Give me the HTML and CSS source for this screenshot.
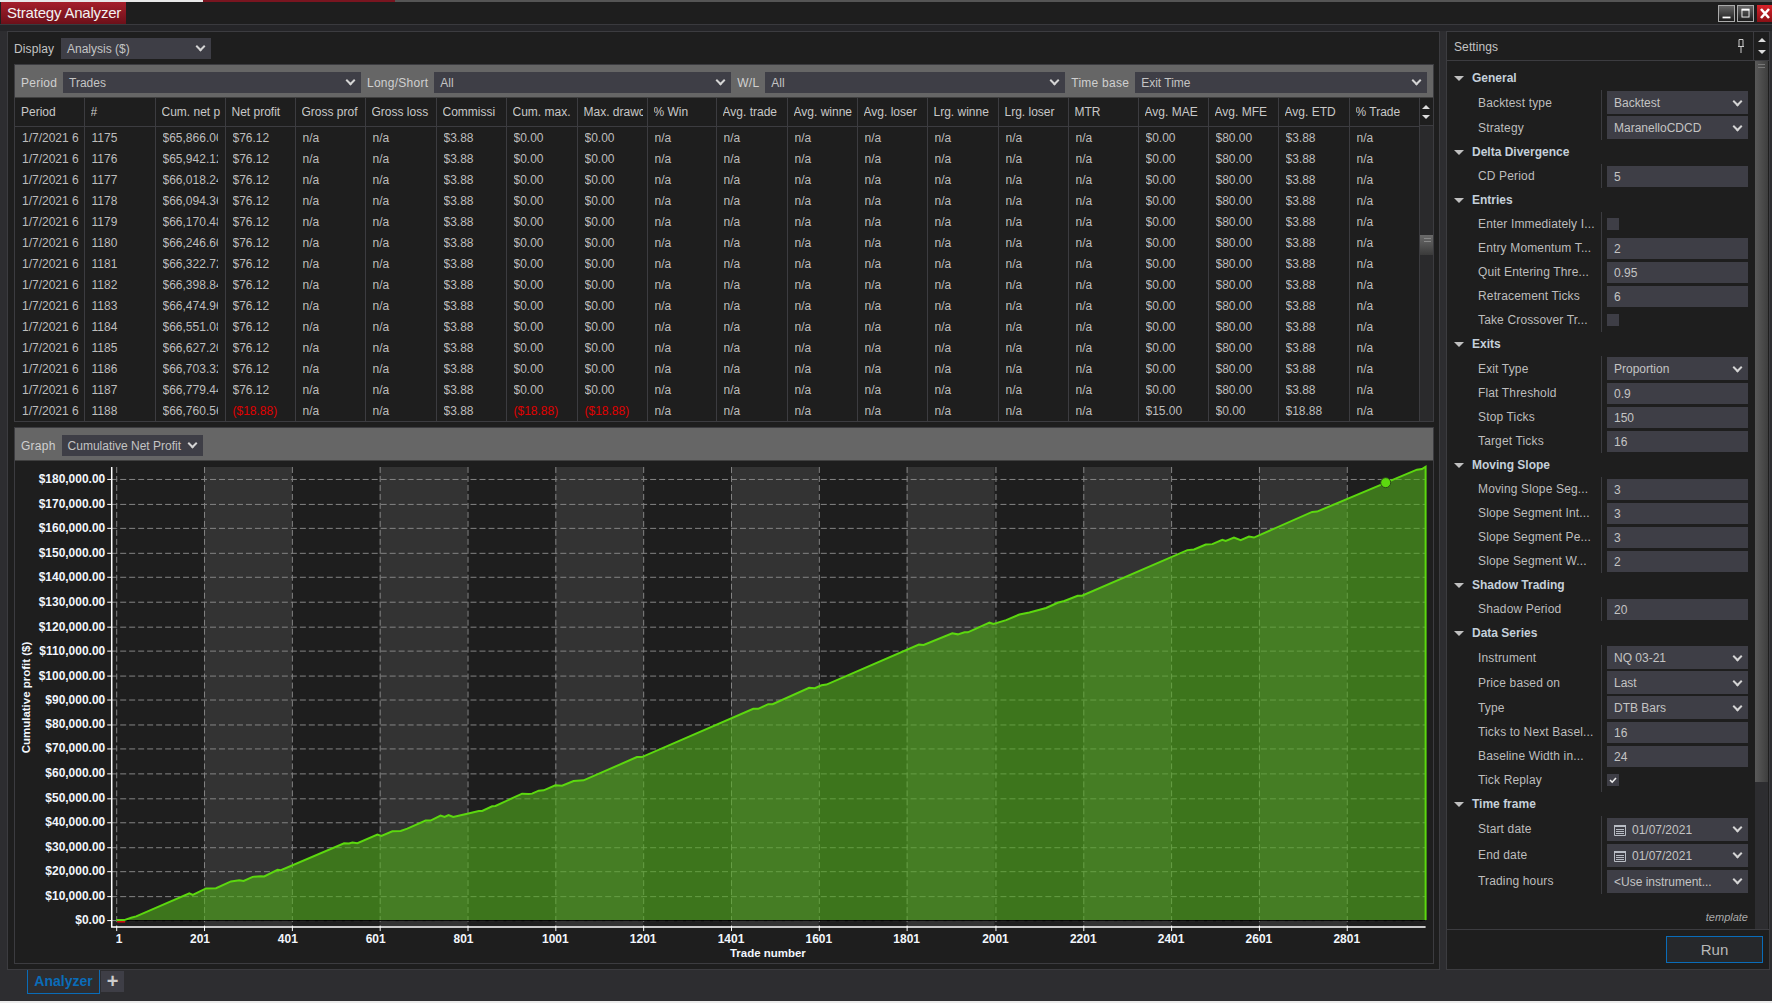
FILE: index.html
```html
<!DOCTYPE html>
<html lang="en">
  <head>
    <meta charset="UTF-8" />
    <title>Strategy Analyzer</title>
    <link rel="stylesheet" href="styles.css">
  </head>
  <body>
    <div class="top-strip"></div>

    <header class="titlebar">
      <div class="title-tab">Strategy Analyzer</div>
      <div class="window-buttons">
        <svg class="win-btn" viewBox="0 0 17 17"><rect x="4" y="12" width="9" height="2" fill="#fff" /></svg>
        <svg class="win-btn" viewBox="0 0 17 17"><rect x="4.5" y="4.5" width="8" height="8" fill="none" stroke="#fff" /><rect x="4" y="3" width="9" height="2" fill="#fff" /></svg>
        <svg class="win-btn win-close" viewBox="0 0 15 17"><path d="M4 4l8 9M12 4l-8 9" stroke="#fff" stroke-width="2.6" /></svg>
      </div>
    </header>

    <main class="main">
      <section class="left-panel">
        <div class="display-row">
          <span class="display-label">Display</span>
          <div class="select display-select">Analysis ($)</div>
        </div>

        <div class="frame">
          <div class="band">
            <span class="period-label">Period</span>
            <div class="select period-select">Trades</div>
            <span>Long/Short</span>
            <div class="select side-select">All</div>
            <span>W/L</span>
            <div class="select wl-select">All</div>
            <span>Time base</span>
            <div class="select grow">Exit Time</div>
          </div>
          <div class="table-wrap">
            <table class="trades" id="trades"></table>
            <div class="table-scroll">
              <div class="scroll-head">
                <i class="arrow-up"></i>
                <i class="arrow-down"></i>
              </div>
              <div class="table-thumb"></div>
            </div>
          </div>
        </div>

        <div class="frame graph-frame">
          <div class="band">
            <span>Graph</span>
            <div class="select graph-select">Cumulative Net Profit</div>
          </div>
          <svg class="chart" id="chart" viewBox="15 460 1418 503"></svg>
        </div>
      </section>

      <aside class="settings">
        <div class="settings-head">
          <span class="settings-title">Settings</span>
          <svg class="pin" viewBox="0 0 8 16"><path d="M2 1.5h4v7H2zM1 8.5h6M4 9v6" fill="none" stroke="#ccc" /></svg>
          <div class="settings-arrows">
            <i class="arrow-up"></i>
            <i class="arrow-down"></i>
          </div>
        </div>

        <div class="settings-body">
          <div class="settings-list">
            <div class="cat"><i class="tri"></i>General</div>
            <div class="row tall"><span class="lbl">Backtest type</span><div class="val"><div class="select box">Backtest</div></div></div>
            <div class="row tall"><span class="lbl">Strategy</span><div class="val"><div class="select box">MaranelloCDCD</div></div></div>

            <div class="cat"><i class="tri"></i>Delta Divergence</div>
            <div class="row"><span class="lbl">CD Period</span><div class="val"><div class="box">5</div></div></div>

            <div class="cat"><i class="tri"></i>Entries</div>
            <div class="row"><span class="lbl">Enter Immediately I...</span><div class="val"><div class="check"></div></div></div>
            <div class="row"><span class="lbl">Entry Momentum T...</span><div class="val"><div class="box">2</div></div></div>
            <div class="row"><span class="lbl">Quit Entering Thre...</span><div class="val"><div class="box">0.95</div></div></div>
            <div class="row"><span class="lbl">Retracement Ticks</span><div class="val"><div class="box">6</div></div></div>
            <div class="row"><span class="lbl">Take Crossover Tr...</span><div class="val"><div class="check"></div></div></div>

            <div class="cat"><i class="tri"></i>Exits</div>
            <div class="row tall"><span class="lbl">Exit Type</span><div class="val"><div class="select box">Proportion</div></div></div>
            <div class="row"><span class="lbl">Flat Threshold</span><div class="val"><div class="box">0.9</div></div></div>
            <div class="row"><span class="lbl">Stop Ticks</span><div class="val"><div class="box">150</div></div></div>
            <div class="row"><span class="lbl">Target Ticks</span><div class="val"><div class="box">16</div></div></div>

            <div class="cat"><i class="tri"></i>Moving Slope</div>
            <div class="row"><span class="lbl">Moving Slope Seg...</span><div class="val"><div class="box">3</div></div></div>
            <div class="row"><span class="lbl">Slope Segment Int...</span><div class="val"><div class="box">3</div></div></div>
            <div class="row"><span class="lbl">Slope Segment Pe...</span><div class="val"><div class="box">3</div></div></div>
            <div class="row"><span class="lbl">Slope Segment W...</span><div class="val"><div class="box">2</div></div></div>

            <div class="cat"><i class="tri"></i>Shadow Trading</div>
            <div class="row"><span class="lbl">Shadow Period</span><div class="val"><div class="box">20</div></div></div>

            <div class="cat"><i class="tri"></i>Data Series</div>
            <div class="row tall"><span class="lbl">Instrument</span><div class="val"><div class="select box">NQ 03-21</div></div></div>
            <div class="row tall"><span class="lbl">Price based on</span><div class="val"><div class="select box">Last</div></div></div>
            <div class="row tall"><span class="lbl">Type</span><div class="val"><div class="select box">DTB Bars</div></div></div>
            <div class="row"><span class="lbl">Ticks to Next Basel...</span><div class="val"><div class="box">16</div></div></div>
            <div class="row"><span class="lbl">Baseline Width in...</span><div class="val"><div class="box">24</div></div></div>
            <div class="row"><span class="lbl">Tick Replay</span><div class="val"><div class="check"><svg viewBox="0 0 12 12"><path d="M3 6l2.2 2.2L9 4" fill="none" stroke="#eee" stroke-width="1.6" /></svg></div></div></div>

            <div class="cat"><i class="tri"></i>Time frame</div>
            <div class="row taller"><span class="lbl">Start date</span><div class="val"><div class="select box date"><svg class="cal" viewBox="0 0 12 12"><path d="M.5 1.5h11v10H.5z" fill="none" stroke="#b8bcc4" /><path d="M0 1h12v2H0zM2 5h8v1H2zM2 7h8v1H2zM2 9h8v1H2z" fill="#b8bcc4" /></svg>01/07/2021</div></div></div>
            <div class="row taller"><span class="lbl">End date</span><div class="val"><div class="select box date"><svg class="cal" viewBox="0 0 12 12"><path d="M.5 1.5h11v10H.5z" fill="none" stroke="#b8bcc4" /><path d="M0 1h12v2H0zM2 5h8v1H2zM2 7h8v1H2zM2 9h8v1H2z" fill="#b8bcc4" /></svg>01/07/2021</div></div></div>
            <div class="row taller"><span class="lbl">Trading hours</span><div class="val"><div class="select box">&lt;Use instrument...</div></div></div>

            <div class="template">template</div>
          </div>
          <div class="settings-scroll">
            <div class="settings-thumb"></div>
          </div>
        </div>

        <div class="settings-foot">
          <button class="run">Run</button>
        </div>
      </aside>
    </main>

    <footer class="tabbar">
      <div class="tab">Analyzer</div>
      <div class="tab-add">+</div>
    </footer>
    <div class="bottom-strip"></div>

    <script src="script.js"></script>
  </body>
</html>
```

FILE: styles.css
```css
html {
  font-family: "Liberation Sans", Arial, sans-serif;
  font-size: 12px;
}

body {
  margin: 0;
  width: 1772px;
  height: 1003px;
  overflow: hidden;
  background-color: #2d2d30;
  color: #bdbdbd;
}

.top-strip {
  height: 2px;
  background: linear-gradient(to right, #e8e8e8 203px, #7a1520 203px, #7a1520 395px, #555 395px);
}

.titlebar {
  display: flex;
  justify-content: space-between;
  height: 22px;
  background-color: #1e1e1e;
  border-bottom: 1px solid #3a3a3e;
}

.title-tab {
  width: 125px;
  box-sizing: border-box;
  margin-left: 1px;
  padding-left: 6px;
  line-height: 22px;
  font-size: 15px;
  letter-spacing: -0.2px;
  white-space: nowrap;
  color: #f2f2f2;
  background: linear-gradient(to bottom, #a51f2b, #6c1019);
}

.window-buttons {
  display: flex;
  gap: 2px;
  padding-top: 3px;
}

.win-btn {
  width: 17px;
  height: 17px;
  box-sizing: border-box;
  border: 1px solid #aaa;
  background: linear-gradient(to bottom, #666, #1c1c1c);
}

.win-close {
  width: 15px;
  margin-left: 1px;
  border: none;
  background: linear-gradient(to bottom, #d8232a, #8a1016);
}

.main {
  display: flex;
  gap: 6px;
  height: 945px;
  box-sizing: border-box;
  padding: 6px 2px 0 7px;
  background: linear-gradient(to bottom, #252528 6px, transparent 6px);
}

.left-panel {
  display: flex;
  flex-direction: column;
  width: 1433px;
  box-sizing: border-box;
  padding: 0 5px 5px 6px;
  background-color: #1e1e1e;
  border: 1px solid #3c3c40;
}

.display-row {
  display: flex;
  align-items: center;
  height: 32px;
  padding-top: 1px;
  box-sizing: border-box;
  flex: none;
}

.display-label {
  width: 47px;
  color: #c4c4c4;
  letter-spacing: 0.1px;
}

.select {
  display: flex;
  align-items: center;
  justify-content: space-between;
  height: 21px;
  box-sizing: border-box;
  padding: 0 7px 0 6px;
  background-color: #3e3e46;
  color: #c4c4c4;
  white-space: nowrap;
}

.select::after {
  content: "";
  width: 5px;
  height: 5px;
  margin: -4px 0 0 0;
  border-right: 2px solid #d4d4d4;
  border-bottom: 2px solid #d4d4d4;
  transform: rotate(45deg);
}

.display-select {
  width: 150px;
}

.period-label {
  width: 36px;
}

.period-select {
  width: 298px;
}

.side-select {
  width: 297px;
}

.wl-select {
  width: 300px;
}

.grow {
  flex: 1;
}

.graph-select {
  width: 141px;
}

.frame {
  display: flex;
  flex-direction: column;
  flex: none;
  border: 1px solid #3c3c40;
}

.graph-frame {
  flex: 1;
  min-height: 0;
  margin-top: 5px;
}

.band {
  display: flex;
  align-items: center;
  gap: 6px;
  height: 33px;
  flex: none;
  box-sizing: border-box;
  padding: 3px 6px 0;
  background-color: #666;
  color: #d0d0d0;
  border-bottom: 1px solid #404040;
  letter-spacing: 0.25px;
}

.band .select {
  letter-spacing: 0;
}

.table-wrap {
  display: flex;
}

.trades {
  width: 1404px;
  table-layout: fixed;
  border-collapse: collapse;
  flex: none;
}

.trades th,
.trades td {
  padding: 0;
  border-right: 1px solid #3c3c40;
  font-weight: normal;
  text-align: left;
}

.trades th {
  height: 28px;
  border-bottom: 1px solid #3c3c40;
  color: #c8c8c8;
}

.trades td {
  height: 21px;
}

.cell {
  margin: 0 7px 0 7px;
  overflow: hidden;
  white-space: nowrap;
}

.trades td:first-child .cell {
  margin-right: 3px;
}

.trades th .cell {
  margin-left: 6px;
  margin-right: 4px;
}

.loss {
  color: #e00000;
}

.table-scroll {
  flex: 1;
  background-color: #2a2a2c;
}

.scroll-head {
  display: flex;
  flex-direction: column;
  align-items: center;
  justify-content: center;
  gap: 6px;
  height: 28px;
  background-color: #1e1e1e;
  border-bottom: 1px solid #3c3c40;
  box-sizing: border-box;
}

.arrow-up,
.arrow-down {
  width: 0;
  height: 0;
  border-left: 4px solid transparent;
  border-right: 4px solid transparent;
}

.arrow-up {
  border-bottom: 4px solid #ddd;
}

.arrow-down {
  border-top: 4px solid #ddd;
}

.table-thumb {
  height: 20px;
  margin-top: 109px;
  background:
    linear-gradient(to bottom, transparent 3px, #888 3px, #888 4px, transparent 4px, transparent 6px, #888 6px, #888 7px, transparent 7px) 4px 0 / 7px 100% no-repeat,
    linear-gradient(to bottom, #6a6a6a, #3a3a3a);
}

.chart {
  display: block;
  width: 1418px;
  height: 503px;
}

.y-label,
.x-label,
.axis-title {
  font-family: "Liberation Sans", Arial, sans-serif;
  font-size: 12px;
  font-weight: bold;
  fill: #f2f6fc;
}

.y-label {
  text-anchor: end;
}

.x-label,
.axis-title {
  text-anchor: middle;
}

.axis-title {
  font-size: 11.5px;
}

.settings {
  display: flex;
  flex-direction: column;
  flex: 1;
  background-color: #1e1e1e;
  border: 1px solid #3c3c40;
}

.settings-head {
  display: flex;
  align-items: center;
  height: 28px;
  flex: none;
  border-bottom: 1px solid #3c3c40;
}

.settings-title {
  flex: 1;
  padding: 1px 0 0 7px;
  color: #c4c4c4;
  letter-spacing: 0.1px;
}

.pin {
  width: 8px;
  height: 16px;
  margin-right: 8px;
}

.settings-arrows {
  display: flex;
  flex-direction: column;
  align-items: center;
  justify-content: center;
  gap: 8px;
  width: 15px;
  height: 100%;
  border-left: 1px solid #3c3c40;
}

.settings-body {
  display: flex;
  flex: 1;
  min-height: 0;
}

.settings-list {
  flex: 1;
  padding-top: 5px;
}

.settings-scroll {
  width: 13px;
  margin-right: 1px;
  background-color: #2d2d30;
}

.settings-thumb {
  height: 721px;
  background:
    linear-gradient(to bottom, transparent 3px, #777 3px, #777 4px, transparent 4px, transparent 6px, #777 6px, #777 7px, transparent 7px) 3px 0 / 7px 10px no-repeat,
    linear-gradient(to right, #5a5a5a, #3e3e3e);
}

.cat {
  display: flex;
  align-items: center;
  height: 24px;
  padding-left: 7px;
  font-weight: bold;
  color: #c5d0da;
}

.tri {
  width: 0;
  height: 0;
  margin: 1px 8px 0 0;
  border-left: 5px solid transparent;
  border-right: 5px solid transparent;
  border-top: 5px solid #c0c0c0;
}

.row {
  display: flex;
  height: 24px;
}

.tall {
  height: 25px;
}

.taller {
  height: 26px;
}

.lbl {
  width: 123px;
  padding: 1px 0 0 31px;
  line-height: 23px;
  letter-spacing: 0.15px;
  white-space: nowrap;
  overflow: hidden;
}

.tall .lbl {
  line-height: 24px;
}

.taller .lbl {
  line-height: 25px;
}

.val {
  display: flex;
  align-items: center;
  flex: 1;
  padding: 0 7px 0 5px;
  border-left: 1px solid #3c3c40;
}

.box {
  flex: 1;
  height: 21px;
  box-sizing: border-box;
  line-height: 20px;
  padding: 1px 7px 0;
  background-color: #3e3e46;
  color: #c4c4c4;
}

.tall .box,
.taller .box {
  height: 23px;
}

.date {
  justify-content: flex-start;
}

.date::after {
  margin-left: auto;
}

.cal {
  width: 12px;
  height: 12px;
  margin-right: 6px;
}

.check {
  width: 12px;
  height: 12px;
  background-color: #3e3e46;
}

.check svg {
  display: block;
}

.template {
  margin-top: 15px;
  padding-right: 7px;
  line-height: 16px;
  font-size: 11px;
  font-style: italic;
  text-align: right;
  color: #aaa;
}

.settings-foot {
  display: flex;
  justify-content: flex-end;
  align-items: center;
  height: 39px;
  flex: none;
  padding-right: 6px;
  border-top: 1px solid #3c3c40;
}

.run {
  width: 97px;
  height: 27px;
  font-family: inherit;
  font-size: 15px;
  color: #b8b8b8;
  background-color: #26282b;
  border: 1px solid #0a6cb8;
}

.tabbar {
  display: flex;
  height: 31px;
  box-sizing: border-box;
  padding-left: 27px;
  gap: 1px;
}

.tab {
  width: 73px;
  height: 24px;
  box-sizing: border-box;
  line-height: 23px;
  text-align: center;
  font-size: 14px;
  font-weight: bold;
  color: #0a6cb8;
  border: 1px solid #0a6cb8;
  border-top: none;
}

.tab-add {
  width: 23px;
  height: 21px;
  margin-top: 1px;
  line-height: 20px;
  text-align: center;
  font-size: 20px;
  font-weight: bold;
  color: #ccc;
  background-color: #3e3e46;
}

.bottom-strip {
  height: 2px;
  background-color: #ececec;
}
```

FILE: script.js
```js
const columns = [
  ["Period", 69], ["#", 71], ["Cum. net p", 70], ["Net profit", 70], ["Gross prof", 70],
  ["Gross loss", 71], ["Commissi", 70], ["Cum. max.", 71], ["Max. drawc", 70], ["% Win", 69],
  ["Avg. trade", 71], ["Avg. winne", 70], ["Avg. loser", 70], ["Lrg. winne", 71], ["Lrg. loser", 70],
  ["MTR", 70], ["Avg. MAE", 70], ["Avg. MFE", 70], ["Avg. ETD", 71], ["% Trade", 70],
];

const money = (n) => "$" + n.toLocaleString("en-US", { minimumFractionDigits: 2, maximumFractionDigits: 2 });
const cell = (text, cls) => `<td><div class="cell${cls ? " " + cls : ""}">${text}</div></td>`;

function buildTable() {
  let html = "<colgroup>" + columns.map((c) => `<col style="width:${c[1]}px">`).join("") + "</colgroup>";
  html += "<tr>" + columns.map((c) => `<th><div class="cell">${c[0]}</div></th>`).join("") + "</tr>";

  for (let i = 0; i < 14; i++) {
    const last = i === 13;
    const loss = "($18.88)";
    let row = cell("1/7/2021 6") + cell(1175 + i);
    row += cell(money(last ? 66760.56 : 65866 + i * 76.12));
    row += last ? cell(loss, "loss") : cell("$76.12");
    row += cell("n/a") + cell("n/a") + cell("$3.88");
    row += last ? cell(loss, "loss") + cell(loss, "loss") : cell("$0.00") + cell("$0.00");
    row += cell("n/a").repeat(7);
    row += cell(last ? "$15.00" : "$0.00") + cell(last ? "$0.00" : "$80.00") + cell(last ? "$18.88" : "$3.88");
    row += cell("n/a");
    html += `<tr>${row}</tr>`;
  }
  document.querySelector("#trades").innerHTML = html;
}

// curve traced from the picture, in page pixels
const curve = [
  [115, 920], [123, 920], [130, 917.7], [135, 916.3], [188.3, 893.3], [191.7, 894.7], [205, 888.3], [215, 888],
  [230, 881.3], [238.3, 880], [242.7, 880.7], [251.7, 876.7], [260, 876], [263.3, 876.3], [276.7, 869.7], [280, 870],
  [343.3, 843], [348.3, 843.3], [351.7, 842.3], [356.7, 843], [376.7, 834.3], [380.7, 835.7], [391.7, 831], [400, 830.7],
  [406.7, 828.3], [425, 820.3], [430, 820.3], [440, 815.3], [444, 816.7], [448, 814.7], [452.7, 816.7], [470, 812.7],
  [478.3, 810.7], [481.7, 810.7], [491.7, 806], [495, 805.7], [521.7, 793.3], [528.3, 793.7], [531.7, 793.3], [538.3, 790.3],
  [543.3, 790], [555, 785], [561.7, 785.3], [573.3, 780.7], [583.3, 780], [636.7, 756.7], [641.7, 756.7], [753.3, 708.3],
  [758.3, 708.3], [768.3, 703.7], [772.7, 703.7], [809.3, 687.3], [815, 687.7], [821.7, 684.7], [826.7, 684], [919.3, 644],
  [924, 644.3], [952.7, 632.7], [958.3, 633.7], [965, 631.7], [968.3, 631.7], [990, 622], [994, 623.3], [1006.7, 619.5],
  [1020, 613.8], [1030, 611.8], [1046.7, 607.3], [1058.3, 602], [1065, 600.3], [1078.3, 595], [1082.7, 595], [1188.3, 549.3],
  [1195, 548.7], [1206.7, 543.7], [1213.3, 543.3], [1223.3, 539], [1226.7, 540], [1235, 536.7], [1241.7, 539.3], [1250, 535.7],
  [1255, 536.7], [1313.3, 511], [1318.3, 510.7], [1418.3, 468.7], [1423.3, 468], [1427, 465.7],
];

function buildChart() {
  const xTick = (i) => Math.floor(115.5 + i * 88.05);
  const yTick = (i) => Math.round(920.3 - i * 24.56);
  let html = "";

  // alternating shaded columns
  for (let i = 1; i < 15; i += 2) {
    html += `<rect x="${xTick(i)}" y="466" width="88" height="460" fill="#333" />`;
  }

  // grid, labels and ticks
  let grid = "";
  let text = "";
  for (let i = 0; i <= 18; i++) {
    const y = yTick(i);
    grid += `M110 ${y + 0.5}H1427`;
    text += `<text class="y-label" x="104" y="${y + 4}">${money(i * 10000)}</text>`;
    html += `<path d="M106 ${y + 0.5}H110" stroke="#fff" />`;
  }
  for (let i = 0; i < 15; i++) {
    const x = xTick(i);
    const n = 1 + i * 200;
    const center = n === 1 ? x + 3 : n < 1000 ? x - 4 : x;
    grid += `M${x + 0.5} 466V926`;
    text += `<text class="x-label" x="${center}" y="943">${n}</text>`;
    html += `<path d="M${x + 0.5} 926V931" stroke="#fff" />`;
  }
  html += `<path d="${grid}" stroke="#858585" stroke-dasharray="6 3" fill="none" />`;

  // profit area and line
  const points = curve.map((p) => p.join(",")).join(" ");
  html += `<polygon points="${points} 1427,920 115,920" fill="rgba(82,175,27,0.6)" />`;
  html += `<path d="M115 920.5H1427" stroke="#000" />`;
  html += `<path d="M116 921.5H124" stroke="#d01010" stroke-width="2" />`;
  html += `<polyline points="${points} 1427,920" fill="none" stroke="#5cd80f" stroke-width="2" />`;
  html += `<circle cx="1387" cy="481.7" r="5" fill="#5cd80f" stroke="#2a4a18" />`;

  // axes
  html += `<path d="M110.5 466V927H1427" fill="none" stroke="#fff" stroke-width="1.5" />`;
  html += text;
  html += `<text class="axis-title" x="768" y="957">Trade number</text>`;
  html += `<text class="axis-title" transform="translate(29 697) rotate(-90)">Cumulative profit ($)</text>`;

  document.querySelector("#chart").innerHTML = html;
}

buildTable();
buildChart();
```
